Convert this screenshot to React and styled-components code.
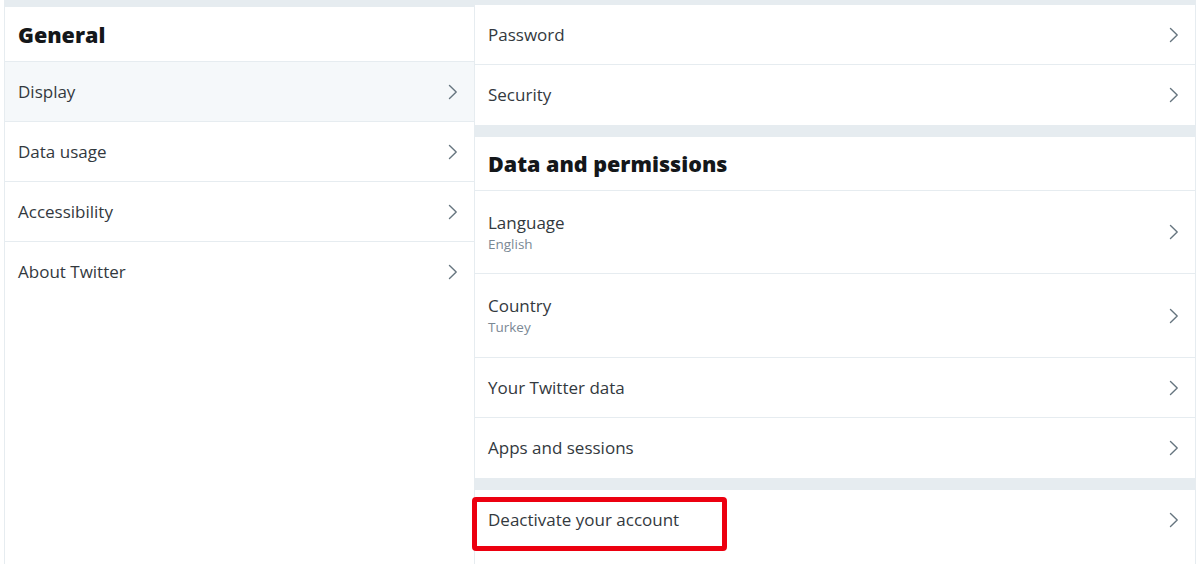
import React from "react";
import styled, { createGlobalStyle } from "styled-components";

const GlobalStyle = createGlobalStyle`
  body {
    margin: 0;
    background: #ffffff;
    font-family: "Open Sans", "Noto Sans", sans-serif;
    color: #24292e;
  }
`;

const Page = styled.div`
  display: flex;
  width: 1200px;
  height: 564px;
  overflow: hidden;
  padding: 0 4px 0 4px;
  box-sizing: border-box;
`;

const Column = styled.div`
  display: flex;
  flex-direction: column;
  width: ${(p) => (p.$width ? `${p.$width}px` : "auto")};
  flex: ${(p) => (p.$width ? "none" : "1")};
  border-left: 1px solid #e6ecf0;
  border-right: ${(p) => (p.$last ? "1px solid #e6ecf0" : "none")};
  box-sizing: border-box;
`;

const Gap = styled.div`
  height: ${(p) => p.$h}px;
  background: #e6ecf0;
  flex: none;
`;

const Header = styled.h2`
  margin: 0;
  height: ${(p) => p.$h}px;
  display: flex;
  align-items: center;
  padding: 0 14px 0 13px;
  font-size: 21.5px;
  font-weight: 800;
  color: #14171a;
  border-bottom: 1px solid #e6ecf0;
  box-sizing: border-box;
`;

const Row = styled.div`
  position: relative;
  height: ${(p) => p.$h || 60}px;
  display: flex;
  align-items: center;
  justify-content: space-between;
  padding: 0 16px 0 13px;
  background: ${(p) => (p.$active ? "#f5f8fa" : "#ffffff")};
  border-bottom: ${(p) => (p.$noLine ? "none" : "1px solid #e6ecf0")};
  box-sizing: border-box;
  flex: none;
`;

const Labels = styled.div`
  display: flex;
  flex-direction: column;
`;

const Label = styled.span`
  font-size: 17px;
  color: #33393e;
  line-height: 22px;
`;

const Sub = styled.span`
  font-size: 13.5px;
  color: #7a8894;
  line-height: 18px;
  margin-top: 1px;
`;

const Highlight = styled.div`
  position: absolute;
  left: -3px;
  top: 7px;
  width: 255px;
  height: 54px;
  border: 5px solid #ec0010;
  border-radius: 4px;
  box-sizing: border-box;
  pointer-events: none;
`;

const Chevron = () => (
  <svg width="10" height="16" viewBox="0 0 10 16">
    <path
      d="M1.5 1.5 L8.2 8 L1.5 14.5"
      fill="none"
      stroke="#66757f"
      strokeWidth="1.4"
      strokeLinecap="round"
      strokeLinejoin="round"
    />
  </svg>
);

const Item = ({ label, sub, active, h, noLine, children }) => (
  <Row $active={active} $h={h} $noLine={noLine}>
    <Labels>
      <Label>{label}</Label>
      {sub && <Sub>{sub}</Sub>}
    </Labels>
    <Chevron />
    {children}
  </Row>
);

export default function App() {
  return (
    <>
      <GlobalStyle />
      <Page>
        <Column $width={470}>
          <Gap $h={7} />
          <Header $h={55}>General</Header>
          <Item label="Display" active />
          <Item label="Data usage" />
          <Item label="Accessibility" />
          <Item label="About Twitter" noLine />
        </Column>
        <Column $last>
          <Gap $h={5} />
          <Item label="Password" />
          <Item label="Security" noLine />
          <Gap $h={12} />
          <Header $h={54}>Data and permissions</Header>
          <Item label="Language" sub="English" h={83} />
          <Item label="Country" sub="Turkey" h={84} />
          <Item label="Your Twitter data" />
          <Item label="Apps and sessions" noLine />
          <Gap $h={12} />
          <Item label="Deactivate your account" noLine>
            <Highlight />
          </Item>
        </Column>
      </Page>
    </>
  );
}
